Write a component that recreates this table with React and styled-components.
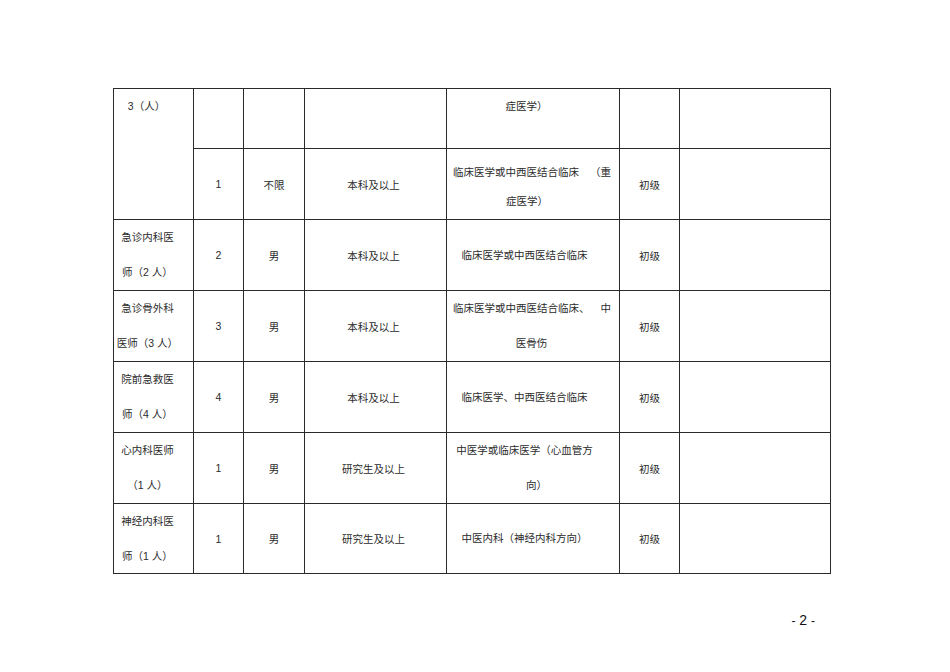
import React from "react";
import styled, { createGlobalStyle } from "styled-components";

const Global = createGlobalStyle`
  html, body { margin: 0; padding: 0; background: #fff; }
  body { font-family: "Liberation Sans", "Noto Sans CJK SC", sans-serif; color: #222; }
`;

const Page = styled.div`
  width: 950px;
  height: 672px;
  box-sizing: border-box;
  padding: 88px 0 0 113px;
  background: #fff;
`;

const Grid = styled.div`
  display: grid;
  width: 718px;
  box-sizing: border-box;
  grid-template-columns: 79px 49px 60px 141px 172px 59px 150px;
  grid-template-rows: 59px 70px 70px 70px 70px 70px 69px;
  gap: 1px;
  padding: 1px;
  background: #2a2a2a;
`;

const Cell = styled.div`
  background: #fff;
  display: flex;
  flex-direction: column;
  justify-content: ${(p) => (p.$top ? "flex-start" : "center")};
  align-items: stretch;
  grid-row: ${(p) => (p.$span ? `span ${p.$span}` : "auto")};
  padding: ${(p) => p.$pad || "0"};
  font-size: 10.5px;
  color: #2b2b2b;
  text-align: center;
  overflow: hidden;
`;

const Line = styled.div`
  line-height: ${(p) => p.$lh || 35}px;
  height: ${(p) => p.$lh || 35}px;
  white-space: nowrap;
  margin-left: ${(p) => p.$dx || 0}px;
`;

const SplitLine = styled.div`
  display: flex;
  justify-content: space-between;
  line-height: ${(p) => p.$lh || 35}px;
  height: ${(p) => p.$lh || 35}px;
  white-space: nowrap;
  padding: 0 8px 0 6px;
`;

const Footer = styled.div`
  width: 702px;
  margin-top: 38px;
  text-align: right;
  font-family: "Liberation Sans", sans-serif;
  font-size: 14px;
  line-height: 16px;
  color: #111;
`;

const Dash = styled.span`
  font-size: 12px;
`;

const NAME_PAD = "0 12px 0 0";
const SPEC_PAD = "0 20px 0 3px";

const rows = [
  {
    name: ["急诊内科医", "师（2 人）"],
    n: "2",
    sex: "男",
    edu: "本科及以上",
    spec: [{ t: "临床医学或中西医结合临床" }],
  },
  {
    name: ["急诊骨外科", "医师（3 人）"],
    n: "3",
    sex: "男",
    edu: "本科及以上",
    spec: [{ split: ["临床医学或中西医结合临床、", "中"] }, { t: "医骨伤", dx: -3 }],
  },
  {
    name: ["院前急救医", "师（4 人）"],
    n: "4",
    sex: "男",
    edu: "本科及以上",
    spec: [{ t: "临床医学、中西医结合临床" }],
  },
  {
    name: ["心内科医师", "（1 人）"],
    n: "1",
    sex: "男",
    edu: "研究生及以上",
    spec: [{ t: "中医学或临床医学（心血管方" }, { t: "向）", dx: 24 }],
  },
  {
    name: ["神经内科医", "师（1 人）"],
    n: "1",
    sex: "男",
    edu: "研究生及以上",
    spec: [{ t: "中医内科（神经内科方向）" }],
  },
];

export default function App() {
  return (
    <>
      <Global />
      <Page>
        <Grid>
          <Cell $span={2} $top $pad={NAME_PAD}>
            <Line $dx={-2}>3（人）</Line>
          </Cell>
          <Cell />
          <Cell />
          <Cell />
          <Cell $top $pad={SPEC_PAD}>
            <Line $dx={4}>症医学）</Line>
          </Cell>
          <Cell />
          <Cell />

          <Cell>1</Cell>
          <Cell>不限</Cell>
          <Cell $pad="0 4px 0 0">本科及以上</Cell>
          <Cell $pad="6px 0 0 0">
            <SplitLine $lh={29}>
              <span>临床医学或中西医结合临床</span>
              <span>（重</span>
            </SplitLine>
            <Line $lh={29} $dx={-12}>症医学）</Line>
          </Cell>
          <Cell>初级</Cell>
          <Cell />

          {rows.map((r, i) => (
            <React.Fragment key={i}>
              <Cell $pad={NAME_PAD}>
                {r.name.map((l, j) => (
                  <Line key={j}>{l}</Line>
                ))}
              </Cell>
              <Cell>{r.n}</Cell>
              <Cell>{r.sex}</Cell>
              <Cell $pad="0 4px 0 0">{r.edu}</Cell>
              <Cell $pad={r.spec.some((s) => s.split) ? "0" : SPEC_PAD}>
                {r.spec.map((s, j) =>
                  s.split ? (
                    <SplitLine key={j}>
                      <span>{s.split[0]}</span>
                      <span>{s.split[1]}</span>
                    </SplitLine>
                  ) : (
                    <Line key={j} $dx={s.dx}>
                      {s.t}
                    </Line>
                  )
                )}
              </Cell>
              <Cell>初级</Cell>
              <Cell />
            </React.Fragment>
          ))}
        </Grid>
        <Footer>
          <Dash>-</Dash> 2 <Dash>-</Dash>
        </Footer>
      </Page>
    </>
  );
}
